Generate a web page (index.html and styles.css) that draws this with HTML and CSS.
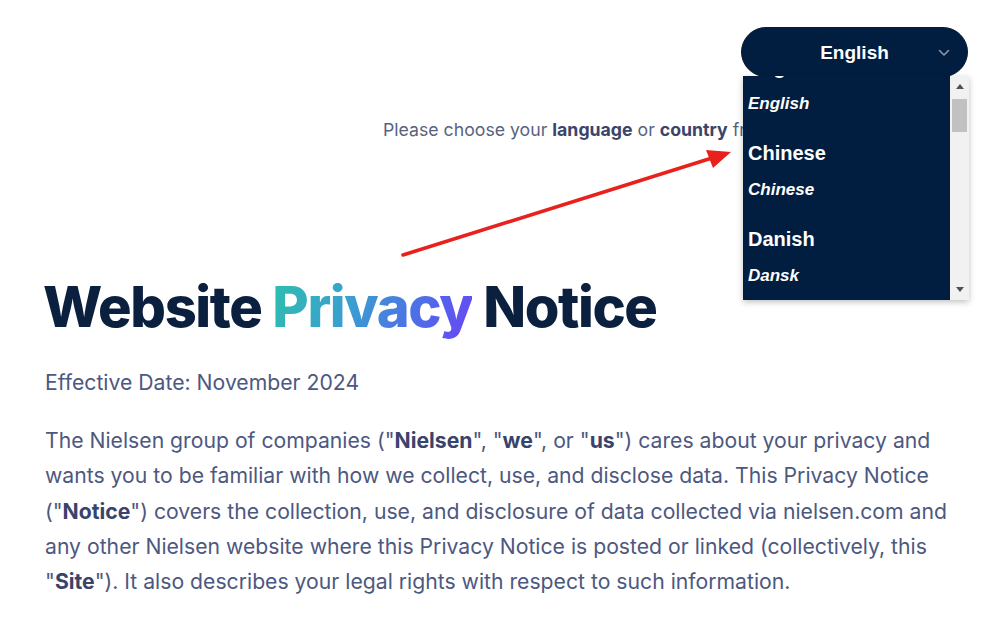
FILE: index.html
```html
<!DOCTYPE html>
<html lang="en">
<head>
<meta charset="utf-8">
<title>Website Privacy Notice</title>
<link rel="stylesheet" href="styles.css">
</head>
<body>
<header class="top">
  <button class="lang-btn" type="button">
    <span class="lang-label">English</span>
    <svg class="chev" width="12" height="8" viewBox="0 0 12 8"><path d="M1.5 1.5 L6 6 L10.5 1.5" fill="none" stroke="#8c96a8" stroke-width="1.6" stroke-linecap="round" stroke-linejoin="round"/></svg>
  </button>
</header>

<p class="choose">Please choose your <b>language</b> or <b>country</b> from the menu.</p>

<main class="content">
  <h1 class="title">Website <span class="grad">Privacy</span> Notice</h1>
  <p class="date">Effective Date: November 2024</p>
  <p class="body">The Nielsen group of companies ("<b>Nielsen</b>", "<b>we</b>", or "<b>us</b>") cares about your privacy and wants you to be familiar with how we collect, use, and disclose data. This Privacy Notice ("<b>Notice</b>") covers the collection, use, and disclosure of data collected via nielsen.com and any other Nielsen website where this Privacy Notice is posted or linked (collectively, this "<b>Site</b>"). It also describes your legal rights with respect to such information.</p>
</main>

<svg class="arrow" width="1000" height="621" viewBox="0 0 1000 621">
  <line x1="403" y1="255" x2="712" y2="158" stroke="#e8211c" stroke-width="3.6" stroke-linecap="round"/>
  <polygon points="731,152 706,150 713,168" fill="#e8211c"/>
</svg>

<div class="menu">
  <div class="menu-list">
    <div class="opt"><div class="opt-name">English</div><div class="opt-native">English</div></div>
    <div class="opt"><div class="opt-name">Chinese</div><div class="opt-native">Chinese</div></div>
    <div class="opt"><div class="opt-name">Danish</div><div class="opt-native">Dansk</div></div>
    <div class="opt"><div class="opt-name">Dutch</div><div class="opt-native">Nederlands</div></div>
  </div>
  <div class="sbar">
    <div class="sbar-up"></div>
    <div class="sbar-thumb"></div>
    <div class="sbar-down"></div>
  </div>
</div>
</body>
</html>
```
FILE: styles.css
```css
html, body {
  margin: 0;
  padding: 0;
  background: #ffffff;
  overflow: hidden;
}
body {
  width: 1000px;
  height: 621px;
  position: relative;
  font-family: "Inter", "Liberation Sans", sans-serif;
  color: #4d5880;
}
.top {
  display: flex;
  justify-content: flex-end;
  padding: 27px 32px 0 0;
}
.lang-btn {
  width: 227px;
  height: 50px;
  border-radius: 25px;
  background: #011e41;
  border: 1px solid #0d1a2e;
  display: flex;
  align-items: center;
  justify-content: center;
  position: relative;
  padding: 0;
}
.lang-label {
  font-family: "Liberation Sans", Arial, sans-serif;
  font-weight: 700;
  font-size: 19px;
  line-height: 24px;
  margin-top: 2px;
  color: #ffffff;
}
.chev {
  position: absolute;
  right: 17px;
  top: 21px;
}
.choose {
  margin: 41px 0 0 383px;
  font-size: 17.7px;
  line-height: 24px;
  white-space: nowrap;
  color: #59637f;
}
.choose b {
  color: #3b456a;
  font-weight: 700;
}
.content {
  padding: 0 45px;
}
.title {
  margin: 131px 0 0 -2px;
  font-size: 56px;
  line-height: 68px;
  font-weight: 800;
  letter-spacing: -1.4px;
  color: #0b1f3f;
}
.grad {
  background: linear-gradient(115deg, #2dc0ac 0%, #3a9fd0 40%, #5168ea 75%, #6b44f6 100%);
  -webkit-background-clip: text;
  background-clip: text;
  color: transparent;
}
.date {
  margin: 26px 0 0;
  font-size: 21.2px;
  line-height: 30px;
}
.body {
  margin: 26px 0 0;
  font-size: 21.2px;
  line-height: 35.3px;
  width: 912px;
}
.body b {
  color: #39436b;
  font-weight: 700;
}
.arrow {
  position: absolute;
  left: 0;
  top: 0;
  pointer-events: none;
}
.menu {
  position: absolute;
  left: 743px;
  top: 76px;
  width: 226px;
  height: 224px;
  display: flex;
  background: #011e41;
  box-shadow: 0 2px 6px rgba(0, 0, 0, 0.25);
  overflow: hidden;
}
.menu-list {
  flex: 1;
  margin-top: -33.5px;
  padding-left: 5px;
  font-family: "Liberation Sans", Arial, sans-serif;
  color: #ffffff;
  font-weight: 700;
}
.opt {
  padding: 12.5px 0;
  display: flex;
  flex-direction: column;
  gap: 13px;
}
.opt-name {
  font-size: 20px;
  line-height: 24px;
}
.opt-native {
  font-size: 17px;
  line-height: 24px;
  font-style: italic;
}
.sbar {
  width: 19px;
  background: #f1f1f1;
  display: flex;
  flex-direction: column;
  align-items: center;
}
.sbar-up {
  margin-top: 8px;
  width: 0;
  height: 0;
  border-left: 4px solid transparent;
  border-right: 4px solid transparent;
  border-bottom: 5px solid #505050;
}
.sbar-thumb {
  margin-top: 10px;
  width: 15px;
  height: 33px;
  background: #c1c1c1;
}
.sbar-down {
  margin-top: auto;
  margin-bottom: 8px;
  width: 0;
  height: 0;
  border-left: 4px solid transparent;
  border-right: 4px solid transparent;
  border-top: 5px solid #505050;
}
```
